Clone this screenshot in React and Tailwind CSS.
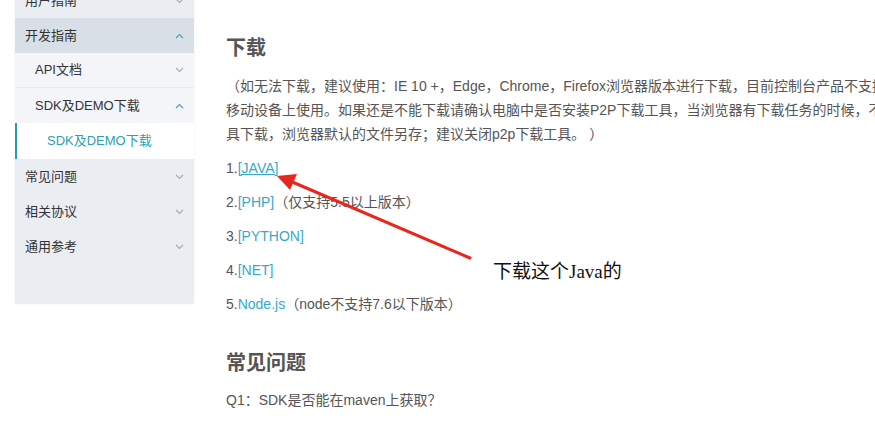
import React from 'react';

const cjk = { fontFamily: '"Liberation Sans", "Noto Sans CJK SC", sans-serif' };

function Chevron({ up, active }) {
  return (
    <svg width="9" height="6" viewBox="0 0 9 6" className="shrink-0">
      <path
        d={up ? 'M1 5 L4.5 1.5 L8 5' : 'M1 1 L4.5 4.5 L8 1'}
        fill="none"
        stroke={active ? '#3ea6b9' : '#a5acb5'}
        strokeWidth="1.2"
      />
    </svg>
  );
}

function NavRow({ label, indent, up, active, bg, border }) {
  return (
    <div className={`flex items-center justify-between h-[35px] pr-[10px] ${bg} ${border ? 'border-b border-[#e6eaef]' : ''}`} style={{ paddingLeft: indent }}>
      <span className="text-[13px] text-[#333]">{label}</span>
      <Chevron up={up} active={active} />
    </div>
  );
}

function Sidebar() {
  return (
    <aside className="ml-[15px] w-[179px] mt-[-17px] h-[321px] bg-[#eaedf2] shadow-[0_0_3px_rgba(0,0,0,0.06)] flex flex-col shrink-0">
      <NavRow label="用户指南" indent={10} bg="bg-[#eaedf2]" />
      <NavRow label="开发指南" indent={10} up active bg="bg-[#d8dfe6]" />
      <NavRow label="API文档" indent={20} bg="bg-[#f3f5f8]" border />
      <NavRow label="SDK及DEMO下载" indent={20} up active bg="bg-[#f3f5f8]" />
      <div className="flex items-center h-[36px] bg-white border-l-2 border-[#2c9ca8] pl-[30px]">
        <span className="text-[13px] text-[#2f9fb3]">SDK及DEMO下载</span>
      </div>
      <NavRow label="常见问题" indent={10} bg="bg-[#eaedf2]" />
      <NavRow label="相关协议" indent={10} bg="bg-[#eaedf2]" />
      <NavRow label="通用参考" indent={10} bg="bg-[#eaedf2]" />
    </aside>
  );
}

const link = 'text-[#36a8cc]';

export default function App() {
  return (
    <div className="relative w-[875px] h-[424px] overflow-hidden bg-white" style={cjk}>
      <div className="flex">
        <Sidebar />
        <main className="ml-[32px] pt-[34px] text-[14px] text-[#555] whitespace-nowrap">
          <h2 className="text-[20px] leading-[28px] font-bold text-[#555]">下载</h2>
          <div className="mt-[12px] leading-[24px]">
            <p>（如无法下载，建议使用：IE 10 +，Edge，Chrome，Firefox浏览器版本进行下载，目前控制台产品不支持在</p>
            <p>移动设备上使用。如果还是不能下载请确认电脑中是否安装P2P下载工具，当浏览器有下载任务的时候，不要使用下载工</p>
            <p>具下载，浏览器默认的文件另存；建议关闭p2p下载工具。 ）</p>
          </div>
          <ul className="mt-[10px] flex flex-col gap-[10px] leading-[24px]">
            <li>1.<a className={`${link} underline`}>[JAVA]</a></li>
            <li>2.<a className={link}>[PHP]</a>（仅支持5.5以上版本）</li>
            <li>3.<a className={link}>[PYTHON]</a></li>
            <li>4.<a className={link}>[NET]</a></li>
            <li>5.<a className={link}>Node.js</a>（node不支持7.6以下版本）</li>
          </ul>
          <h2 className="mt-[33px] text-[20px] leading-[28px] font-bold text-[#555]">常见问题</h2>
          <p className="mt-[11px] leading-[24px]">Q1：SDK是否能在maven上获取？</p>
        </main>
      </div>

      {/* annotation */}
      <svg className="absolute left-0 top-0 pointer-events-none" width="875" height="424">
        <line x1="470" y1="258" x2="290" y2="181" stroke="#e8261e" strokeWidth="3" strokeLinecap="round" />
        <polygon points="277,176 297,174 290,190" fill="#e8261e" />
      </svg>
      <div
        className="absolute left-[493px] top-[258px] text-[19px] leading-[28px] text-[#111]"
        style={{ fontFamily: '"Liberation Serif", "Noto Sans CJK SC", serif' }}
      >
        下载这个Java的
      </div>
    </div>
  );
}
